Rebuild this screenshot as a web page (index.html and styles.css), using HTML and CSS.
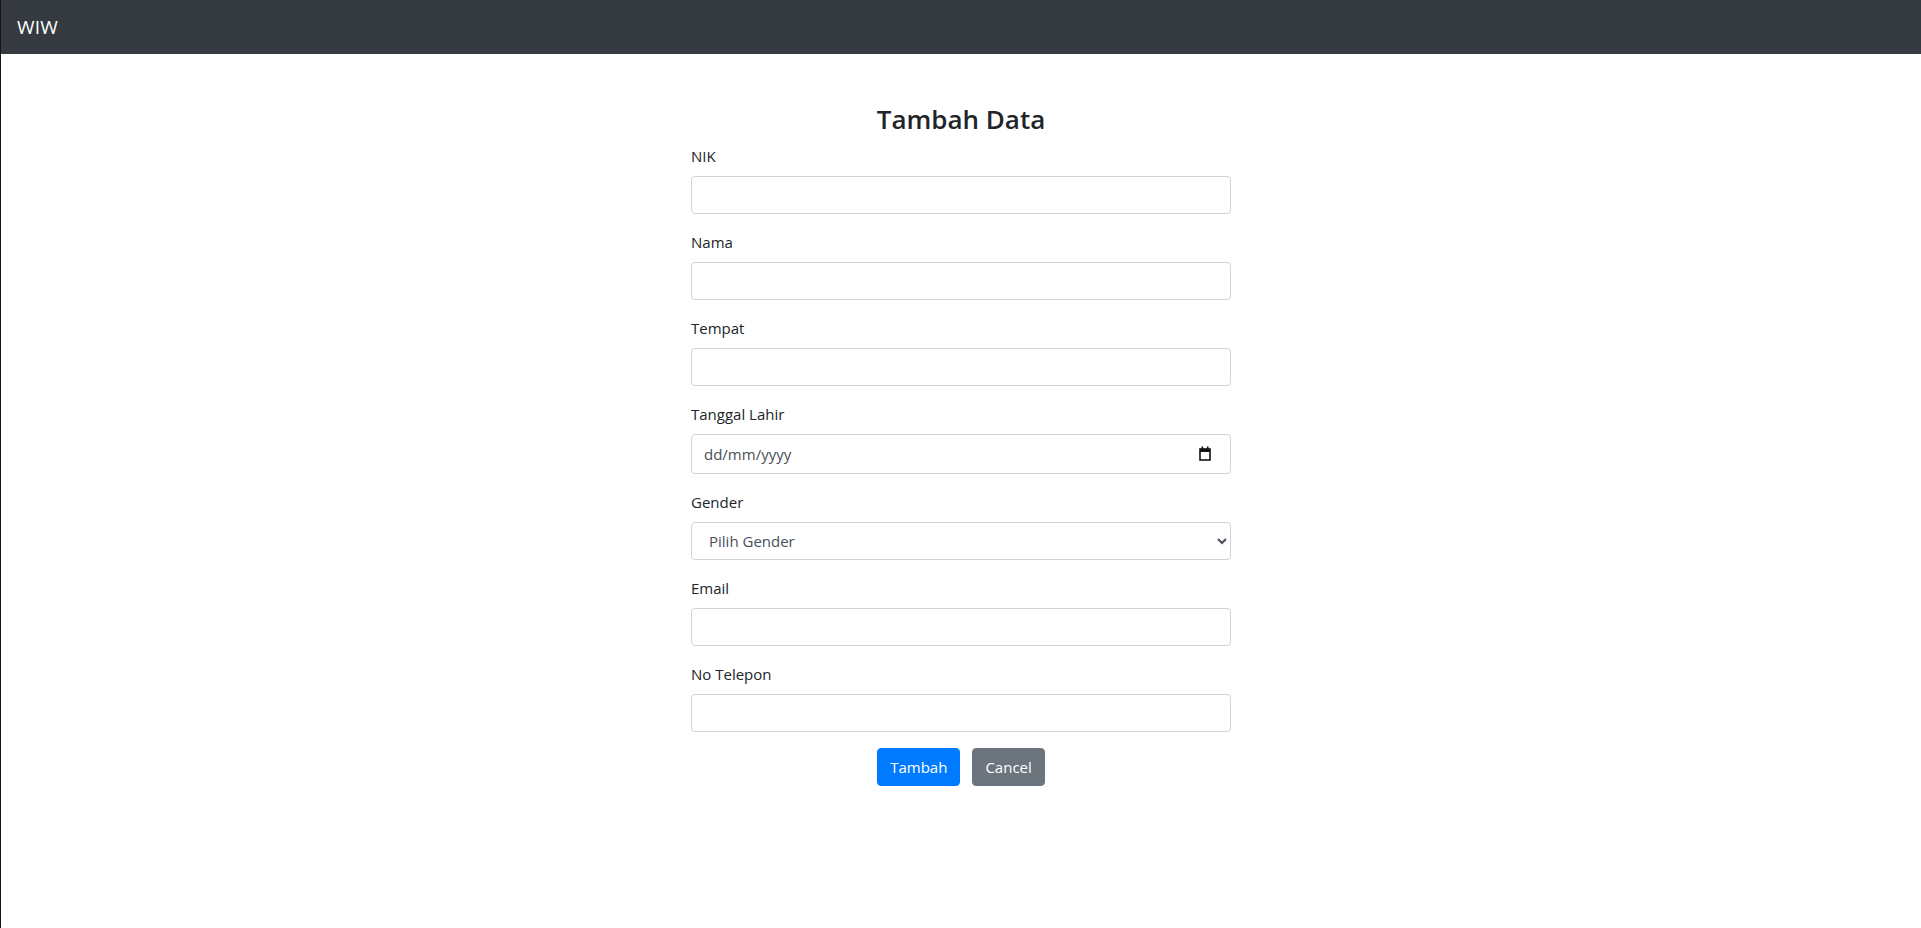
FILE: index.html
```html
<!DOCTYPE html>
<html lang="id">
<head>
<meta charset="utf-8">
<title>Tambah Data</title>
<link rel="stylesheet" href="styles.css">
</head>
<body>
<nav class="navbar">
  <a class="brand" href="#">WIW</a>
</nav>
<main class="container">
  <div class="col">
    <h3 class="title">Tambah Data</h3>
    <form class="form">
      <div class="group">
        <label class="label" for="nik">NIK</label>
        <input class="control" id="nik" type="text">
      </div>
      <div class="group">
        <label class="label" for="nama">Nama</label>
        <input class="control" id="nama" type="text">
      </div>
      <div class="group">
        <label class="label" for="tempat">Tempat</label>
        <input class="control" id="tempat" type="text">
      </div>
      <div class="group">
        <label class="label" for="tgl">Tanggal Lahir</label>
        <div class="date-field">
          <input class="control control-date" id="tgl" type="text" placeholder="dd/mm/yyyy">
          <svg class="cal-icon" width="12" height="15" viewBox="0 0 12 15" aria-hidden="true">
            <rect x="1" y="3" width="10" height="11" fill="none" stroke="#111" stroke-width="1.6"/>
            <rect x="1" y="3" width="10" height="3" fill="#111"/>
            <rect x="2.5" y="0.5" width="1.6" height="3" fill="#111"/>
            <rect x="7.9" y="0.5" width="1.6" height="3" fill="#111"/>
          </svg>
        </div>
      </div>
      <div class="group">
        <label class="label" for="gender">Gender</label>
        <select class="control control-select" id="gender">
          <option>Pilih Gender</option>
          <option>Laki-laki</option>
          <option>Perempuan</option>
        </select>
      </div>
      <div class="group">
        <label class="label" for="email">Email</label>
        <input class="control" id="email" type="text">
      </div>
      <div class="group">
        <label class="label" for="telp">No Telepon</label>
        <input class="control" id="telp" type="text">
      </div>
      <div class="actions">
        <button class="btn btn-primary" type="button">Tambah</button>
        <a class="btn btn-secondary" href="#">Cancel</a>
      </div>
    </form>
  </div>
</main>
</body>
</html>
```

FILE: styles.css
```css
* {
  box-sizing: border-box;
}

html {
  background: #fff;
}

body {
  margin: 0;
  border-left: 1px solid #151515;
  min-height: 100vh;
  font-family: "Open Sans", "Noto Sans", sans-serif;
  font-size: 16px;
  line-height: 24px;
  color: #212529;
  background: #fff;
}

.navbar {
  height: 54px;
  background: #343a40;
  display: flex;
  align-items: center;
  padding: 0 16px;
}

.brand {
  color: #fff;
  text-decoration: none;
  font-size: 19px;
  line-height: 30px;
  letter-spacing: 0.2px;
}

.container {
  max-width: 1140px;
  margin: 0 auto;
  padding-top: 48px;
  display: flex;
  justify-content: center;
}

.col {
  width: 570px;
  padding: 0 15px;
}

.title {
  margin: 0 0 8px;
  text-align: center;
  font-size: 26px;
  line-height: 34px;
  font-weight: 600;
  color: #212529;
}

.form {
  display: flex;
  flex-direction: column;
}

.group {
  margin-bottom: 16px;
}

.label {
  display: block;
  font-size: 15px;
  line-height: 24px;
  margin-bottom: 8px;
  color: #212529;
}

.control {
  display: block;
  width: 100%;
  height: 38px;
  padding: 6px 12px;
  border: 1px solid #ced4da;
  border-radius: 4px;
  font-family: inherit;
  font-size: 15px;
  line-height: 24px;
  color: #495057;
  background: #fff;
}

.control::placeholder {
  color: #495057;
  opacity: 1;
}

.date-field {
  position: relative;
}

.control-date {
  height: 40px;
}

.cal-icon {
  position: absolute;
  right: 20px;
  top: 12px;
}

.control-select {
  padding-left: 13px;
}

.actions {
  display: flex;
  justify-content: center;
  gap: 12px;
}

.btn {
  display: inline-flex;
  align-items: center;
  height: 38px;
  padding: 0 12px;
  border: 1px solid transparent;
  border-radius: 4px;
  font-family: inherit;
  font-size: 15px;
  line-height: 24px;
  color: #fff;
  text-decoration: none;
  cursor: pointer;
}

.btn-primary {
  background: #007bff;
  border-color: #007bff;
}

.btn-secondary {
  background: #6c757d;
  border-color: #6c757d;
}
```
